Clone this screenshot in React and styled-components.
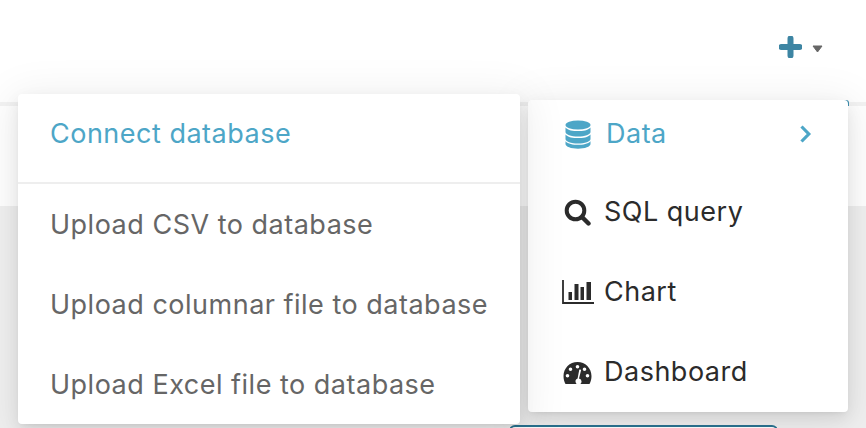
import React from 'react';
import styled, { createGlobalStyle } from 'styled-components';

const Global = createGlobalStyle`
  html, body { margin: 0; padding: 0; width: 866px; height: 428px; overflow: hidden; background: #fff; }
  body { font-family: Inter, "Noto Sans", sans-serif; }
`;

const Page = styled.div`
  position: relative;
  width: 866px;
  height: 428px;
  overflow: hidden;
  display: flex;
  flex-direction: column;
  background: #f0f0f0;
`;

const Header = styled.header`
  height: 102px;
  flex: none;
  background: #fff;
  display: flex;
  justify-content: flex-end;
  align-items: flex-start;
  padding: 36px 43px 0 0;
  box-sizing: border-box;
  gap: 10px;
`;

const Strip = styled.div`
  height: 4px;
  flex: none;
  background: #f3f3f3;
`;

const SubBar = styled.div`
  height: 100px;
  flex: none;
  background: #fff;
`;

const Content = styled.main`
  flex: 1;
  position: relative;
`;

const TealCard = styled.div`
  position: absolute;
  left: 509px;
  top: 219px;
  width: 269px;
  height: 60px;
  box-sizing: border-box;
  border: 2px solid #2b7492;
  border-radius: 6px;
  background: #fff;
`;

const TealCorner = styled.div`
  position: absolute;
  left: 836px;
  top: 100px;
  width: 13px;
  height: 6px;
  background: #3f8fb0;
  border-radius: 0 3px 0 0;
`;

const Menu = styled.div`
  position: absolute;
  background: #fff;
  border-radius: 4px;
  box-shadow: 0 3px 6px -4px rgba(0,0,0,.12), 0 6px 16px 0 rgba(0,0,0,.08), 0 8px 44px 8px rgba(0,0,0,.07);
`;

const MainMenu = styled(Menu)`
  left: 528px;
  top: 100px;
  width: 320px;
  height: 312px;
`;

const SubMenu = styled(Menu)`
  left: 18px;
  top: 94px;
  width: 502px;
  height: 330px;
`;

const MainItem = styled.div`
  height: ${p => p.$h || 80}px;
  display: flex;
  align-items: center;
  box-sizing: border-box;
  padding: 0 36px 0 ${p => p.$pad}px;
  font-size: 27px;
  letter-spacing: 0.5px;
  line-height: 32px;
  white-space: nowrap;
  color: ${p => (p.$active ? '#4da6c7' : '#2b2b2b')};
  margin-bottom: ${p => p.$gap || 0}px;
`;

const IconSlot = styled.span`
  width: ${p => p.$w}px;
  flex: none;
  display: flex;
  align-items: center;
`;

const Chevron = styled.span`
  margin-left: auto;
  display: flex;
`;

const Head = styled.div`
  height: 90px;
  display: flex;
  align-items: center;
  box-sizing: border-box;
  padding: 0 32px 10px;
  font-size: 27px;
  letter-spacing: 0.5px;
  white-space: nowrap;
  color: #4da6c7;
  border-bottom: 2px solid #eeeeee;
`;

const Row = styled.div`
  height: 80px;
  display: flex;
  align-items: center;
  padding: 0 32px;
  font-size: 27px;
  letter-spacing: 0.5px;
  white-space: nowrap;
  color: #666666;
`;

const Plus = () => (
  <svg width="23" height="22" viewBox="0 0 23 22">
    <path d="M11.500 2.500v17M2.500 11h18" stroke="#3d85a3" strokeWidth="6" strokeLinecap="round" />
  </svg>
);

const Caret = () => (
  <svg width="11" height="8" viewBox="0 0 11 8" style={{ marginTop: 9 }}>
    <path d="M1 1h9L5.500 7z" fill="#666" stroke="#666" strokeLinejoin="round" />
  </svg>
);

const Database = () => (
  <svg width="26" height="29" viewBox="0 0 26 29">
    <ellipse cx="13" cy="5" rx="12.500" ry="4.600" fill="#4da6c7" />
    <path d="M.5 7.500C3 10.500 8 11 13 11s10-.5 12.500-3.500V12c0 2.600-5.600 4.600-12.500 4.600S.5 14.600.5 12z" fill="#4da6c7" />
    <path d="M.5 14.500C3 17.500 8 18 13 18s10-.5 12.500-3.500V19c0 2.600-5.600 4.600-12.500 4.600S.5 21.600.5 19z" fill="#4da6c7" />
    <path d="M.5 21.200C3 24 8 24.800 13 24.800s10-.8 12.500-3.600V24c0 2.600-5.600 4.700-12.500 4.700S.5 26.600.5 24z" fill="#4da6c7" />
  </svg>
);

const Search = () => (
  <svg width="27" height="27" viewBox="0 0 27 27">
    <circle cx="11.500" cy="11.500" r="8.800" fill="none" stroke="#2b2b2b" strokeWidth="4" />
    <path d="M18 18l6.500 6.500" stroke="#2b2b2b" strokeWidth="4.400" strokeLinecap="round" />
  </svg>
);

const Bars = () => (
  <svg width="32" height="24" viewBox="0 0 32 24">
    <path d="M1 0v23h31" fill="none" stroke="#2b2b2b" strokeWidth="1.800" />
    <path d="M6.500 12h3.500v8H6.500zM12.500 4h4v16h-4zM18.500 7h3.500v13h-3.500zM24.500 2h4.500v18h-4.500z" fill="#2b2b2b" />
  </svg>
);

const Gauge = () => (
  <svg width="29" height="22" viewBox="0 0 29 22" style={{ marginTop: 2 }}>
    <path
      fillRule="evenodd"
      fill="#2b2b2b"
      d="M14.500 0C6.700 0 .5 6.200.5 14c0 3 .7 5.700 2 8h24c1.300-2.300 2-5 2-8C28.500 6.200 22.300 0 14.500 0zM14.500 3a1.800 1.800 0 1 1 0 3.600 1.800 1.800 0 0 1 0-3.600zM7.500 5.500a1.800 1.800 0 1 1 0 3.600 1.800 1.800 0 0 1 0-3.600zM21.500 5.500a1.800 1.800 0 1 1 0 3.600 1.800 1.800 0 0 1 0-3.600zM4.500 12a1.800 1.800 0 1 1 0 3.600 1.800 1.800 0 0 1 0-3.600zM24.500 12a1.800 1.800 0 1 1 0 3.600 1.800 1.800 0 0 1 0-3.600zM18 8.500l-2 8a3 3 0 1 1-3.400 3.500c-.4-1.600.5-3 2-3.500L16.200 8c.5-.9 2-.5 1.800.5z"
    />
  </svg>
);

const Right = () => (
  <svg width="13" height="20" viewBox="0 0 13 20" style={{ marginTop: -1 }}>
    <path d="M2.500 2.500L9.800 10l-7.300 7.500" fill="none" stroke="#4da6c7" strokeWidth="3.200" />
  </svg>
);

export default function App() {
  return (
    <Page>
      <Global />
      <Header>
        <Plus />
        <Caret />
      </Header>
      <Strip />
      <SubBar />
      <Content>
        <TealCard />
      </Content>
      <TealCorner />
      <MainMenu>
        <MainItem $active $pad={37} $h={68} $gap={4}>
          <IconSlot $w={41}><Database /></IconSlot>
          Data
          <Chevron><Right /></Chevron>
        </MainItem>
        <MainItem $pad={36}>
          <IconSlot $w={40}><Search /></IconSlot>
          SQL query
        </MainItem>
        <MainItem $pad={34}>
          <IconSlot $w={42}><Bars /></IconSlot>
          Chart
        </MainItem>
        <MainItem $pad={35}>
          <IconSlot $w={41}><Gauge /></IconSlot>
          Dashboard
        </MainItem>
      </MainMenu>
      <SubMenu>
        <Head>Connect database</Head>
        <Row>Upload CSV to database</Row>
        <Row>Upload columnar file to database</Row>
        <Row>Upload Excel file to database</Row>
      </SubMenu>
    </Page>
  );
}
